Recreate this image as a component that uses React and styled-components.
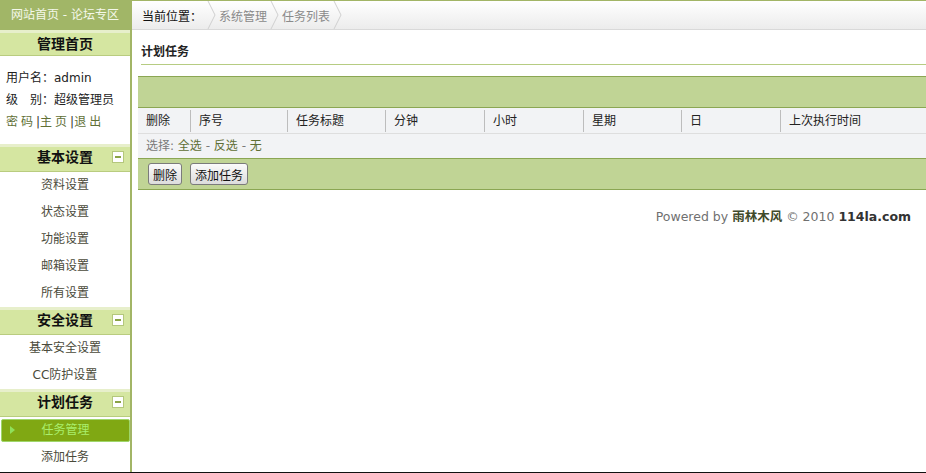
import React from 'react';
import styled, { createGlobalStyle } from 'styled-components';

const GlobalStyle = createGlobalStyle`
  html, body {
    margin: 0;
    padding: 0;
    background: #fff;
  }
  body {
    font-family: "DejaVu Sans", "Noto Sans CJK SC", sans-serif;
    font-size: 12px;
    color: #222;
  }
`;

const Frame = styled.div`
  display: flex;
  height: 472px;
  border-bottom: 1px solid #111;
  overflow: hidden;
`;

/* ---------- left menu ---------- */

const Side = styled.aside`
  width: 130px;
  flex-shrink: 0;
  border-right: 2px solid #a2b566;
  display: flex;
  flex-direction: column;
`;

const SiteBar = styled.div`
  height: 30px;
  line-height: 30px;
  background: #a1b667;
  color: #f4f8ea;
  text-align: center;
  font-size: 12px;
`;

const GroupHead = styled.div`
  position: relative;
  height: ${({ $top }) => ($top ? '22px' : '24px')};
  line-height: ${({ $top }) => ($top ? '22px' : '20px')};
  border-top: 3px solid #e7efcb;
  border-bottom: 1px solid #b9cc7f;
  background: #d5e6a1;
  text-align: center;
  font-weight: bold;
  font-size: 14px;
  color: #111;
`;

const Toggle = styled.span`
  position: absolute;
  right: 6px;
  top: 4px;
  width: 10px;
  height: 10px;
  border: 1px solid #b4c77c;
  background: #fff;
  &::after {
    content: '';
    position: absolute;
    left: 2px;
    top: 4px;
    width: 6px;
    height: 2px;
    background: #8aa346;
  }
`;

const Info = styled.div`
  padding: 11px 0 11px 6px;
  line-height: 22px;
  font-size: 12px;
`;

const InfoLinks = styled.div`
  color: #333;
  a {
    color: #617036;
    text-decoration: none;
    letter-spacing: 3px;
  }
`;

const Item = styled.div`
  position: relative;
  height: ${({ $active }) => ($active ? '21px' : '27px')};
  line-height: ${({ $active }) => ($active ? '21px' : '27px')};
  text-align: center;
  font-size: 12px;
  color: ${({ $active }) => ($active ? '#a9ee6c' : '#4a4a3a')};
  background: ${({ $active }) => ($active ? '#80a813' : 'transparent')};
  border: ${({ $active }) => ($active ? '1px solid #9fd66a' : 'none')};
  border-radius: ${({ $active }) => ($active ? '2px' : '0')};
  margin: ${({ $active }) => ($active ? '2px 0 2px 1px' : '0')};
`;

const Arrow = styled.span`
  position: absolute;
  left: 8px;
  top: 6px;
  width: 0;
  height: 0;
  border-top: 4px solid transparent;
  border-bottom: 4px solid transparent;
  border-left: 5px solid #8fe05a;
`;

/* ---------- right content ---------- */

const Main = styled.main`
  flex: 1;
  display: flex;
  flex-direction: column;
  min-width: 0;
`;

const Crumbs = styled.div`
  height: 28px;
  border-top: 1px solid #a2b566;
  border-bottom: 1px solid #d9d9d9;
  background: linear-gradient(#ffffff, #ececec);
  display: flex;
  align-items: center;
  padding-left: 10px;
  gap: 3px;
`;

const CrumbText = styled.span`
  color: ${({ $here }) => ($here ? '#111' : '#8a8a8a')};
  font-size: 12px;
  margin-right: ${({ $here }) => ($here ? '2px' : '0')};
`;

const Chevron = () => (
  <svg width="9" height="28" viewBox="0 0 9 28">
    <polyline points="1,0 8,14 1,28" fill="none" stroke="#cfcfcf" strokeWidth="1" />
  </svg>
);

const Title = styled.h2`
  margin: 0 0 0 9px;
  padding: 12px 0 0;
  height: 22px;
  font-size: 12px;
  font-weight: bold;
  color: #222;
  border-bottom: 1px solid #b6cc82;
`;

const Board = styled.div`
  margin: 11px 0 0 6px;
`;

const GreenBar = styled.div`
  height: 30px;
  background: #c0d495;
  border-top: 1px solid #8ba653;
  border-bottom: 1px solid #8ba653;
  display: flex;
  align-items: center;
  gap: 8px;
  padding-left: 10px;
`;

const HeadRow = styled.div`
  display: grid;
  grid-template-columns: 52px 97px 98px 99px 99px 98px 99px 1fr;
  height: 25px;
  background: #f2f3f5;
  border-bottom: 1px solid #dedede;
`;

const HeadCell = styled.div`
  padding-left: 8px;
  margin: 2px 0 1px;
  line-height: 22px;
  font-size: 12px;
  color: #222;
  border-left: ${({ $first }) => ($first ? 'none' : '1px solid #bdbdbd')};
`;

const PickRow = styled.div`
  height: 24px;
  line-height: 24px;
  background: #f2f3f5;
  padding-left: 8px;
  color: #7a7a7a;
  font-size: 12px;
  a {
    color: #5f6f34;
    text-decoration: none;
  }
`;

const Button = styled.button`
  height: 22px;
  padding: 0 4px;
  font-family: "DejaVu Sans", "Noto Sans CJK SC", sans-serif;
  font-size: 12px;
  color: #111;
  background: linear-gradient(#fbfbfb, #dcdcdc);
  border: 1px solid #7b7b7b;
  border-radius: 3px;
`;

const Footer = styled.div`
  text-align: right;
  padding: 16px 15px 0 0;
  color: #707070;
  font-size: 12.5px;
  b {
    color: #3f4a2a;
  }
  b:last-child {
    color: #333;
  }
`;

const menu = [
  { title: '基本设置', items: ['资料设置', '状态设置', '功能设置', '邮箱设置', '所有设置'] },
  { title: '安全设置', items: ['基本安全设置', 'CC防护设置'] },
  { title: '计划任务', items: ['任务管理', '添加任务'], active: '任务管理' },
];

const columns = ['删除', '序号', '任务标题', '分钟', '小时', '星期', '日', '上次执行时间'];

export default function App() {
  return (
    <>
      <GlobalStyle />
      <Frame>
        <Side>
          <SiteBar>网站首页 - 论坛专区</SiteBar>
          <GroupHead $top>管理首页</GroupHead>
          <Info>
            <div>用户名：admin</div>
            <div>级　别：超级管理员</div>
            <InfoLinks>
              <a href="#">密码</a>|<a href="#">主页</a>|<a href="#">退出</a>
            </InfoLinks>
          </Info>
          {menu.map((group) => (
            <React.Fragment key={group.title}>
              <GroupHead>
                {group.title}
                <Toggle />
              </GroupHead>
              {group.items.map((name) => (
                <Item key={name} $active={name === group.active}>
                  {name === group.active && <Arrow />}
                  {name}
                </Item>
              ))}
            </React.Fragment>
          ))}
        </Side>

        <Main>
          <Crumbs>
            <CrumbText $here>当前位置：</CrumbText>
            <Chevron />
            <CrumbText>系统管理</CrumbText>
            <Chevron />
            <CrumbText>任务列表</CrumbText>
            <Chevron />
          </Crumbs>
          <Title>计划任务</Title>
          <Board>
            <GreenBar />
            <HeadRow>
              {columns.map((c, i) => (
                <HeadCell key={c} $first={i === 0}>{c}</HeadCell>
              ))}
            </HeadRow>
            <PickRow>
              选择: <a href="#">全选</a> - <a href="#">反选</a> - <a href="#">无</a>
            </PickRow>
            <GreenBar>
              <Button>删除</Button>
              <Button>添加任务</Button>
            </GreenBar>
          </Board>
          <Footer>
            Powered by <b>雨林木风</b> © 2010 <b>114la.com</b>
          </Footer>
        </Main>
      </Frame>
    </>
  );
}
